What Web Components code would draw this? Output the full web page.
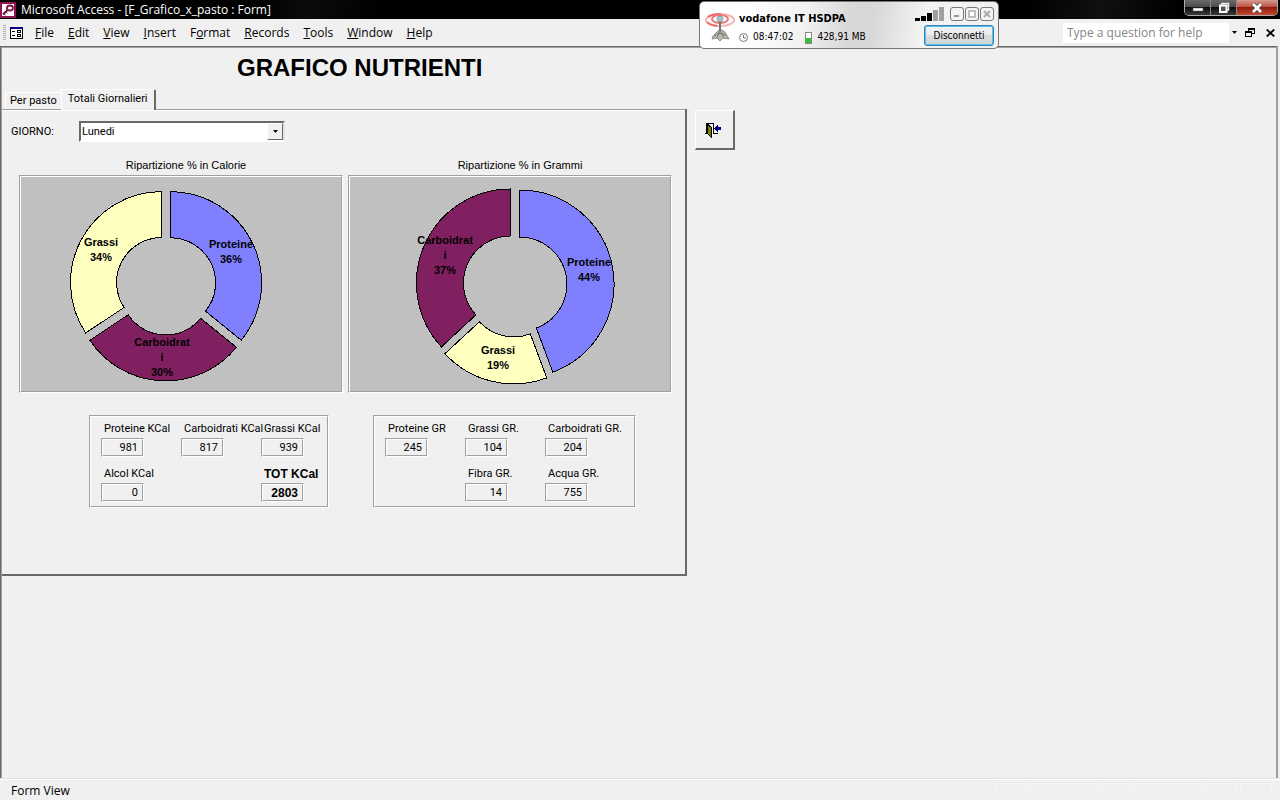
<!DOCTYPE html>
<html lang="it">
<head>
<meta charset="utf-8">
<title>Microsoft Access - [F_Grafico_x_pasto : Form]</title>
<style>
  html, body {
    height: 100%;
    margin: 0;
  }

  body {
    display: flex;
    flex-direction: column;
    overflow: hidden;
    background: #f0f0f0;
    color: #000;
    font-family: 'Open Sans', 'Noto Sans', sans-serif;
    font-size: 12px;
    --form-font: Roboto, 'Liberation Sans', Arial, sans-serif;
  }
</style>
</head>
<body>
  <title-bar>Microsoft Access - [F_Grafico_x_pasto : Form]</title-bar>
  <menu-bar></menu-bar>
  <form-workspace>
    <form-title slot="title">GRAFICO NUTRIENTI</form-title>
    <tab-panel>
      <day-picker></day-picker>
      <chart-row>
        <donut-chart heading="Ripartizione % in Calorie" cx="145" cy="108" radius="91" hole="45" style="--indent: 10px"
          slices='[{"name":["Proteine"],"value":981,"pct":"36%","color":"#8080ff","x":210,"y":71},
                   {"name":["Carboidrat","i"],"value":817,"pct":"30%","color":"#802060","x":141,"y":169},
                   {"name":["Grassi"],"value":939,"pct":"34%","color":"#ffffc0","x":80,"y":69}]'></donut-chart>
        <donut-chart heading="Ripartizione % in Grammi" cx="165" cy="108" radius="94" hole="47" style="--indent: 20px"
          slices='[{"name":["Proteine"],"value":245,"pct":"44%","color":"#8080ff","x":239,"y":89},
                   {"name":["Grassi"],"value":104,"pct":"19%","color":"#ffffc0","x":148,"y":177},
                   {"name":["Carboidrat","i"],"value":204,"pct":"37%","color":"#802060","x":95,"y":67}]'></donut-chart>
      </chart-row>
      <totals-row>
        <value-group>
          <value-field label="Proteine KCal" value="981"></value-field>
          <value-field label="Carboidrati KCal" value="817"></value-field>
          <value-field label="Grassi KCal" value="939"></value-field>
          <value-field label="Alcol KCal" value="0"></value-field>
          <value-field label="TOT KCal" value="2803" strong style="grid-column: 3"></value-field>
        </value-group>
        <value-group wide>
          <value-field label="Proteine GR" value="245"></value-field>
          <value-field label="Grassi GR." value="104"></value-field>
          <value-field label="Carboidrati GR." value="204"></value-field>
          <value-field label="Fibra GR." value="14" style="grid-column: 2"></value-field>
          <value-field label="Acqua GR." value="755"></value-field>
        </value-group>
      </totals-row>
    </tab-panel>
    <exit-button slot="side"></exit-button>
  </form-workspace>
  <status-bar>Form View</status-bar>
  <modem-widget></modem-widget>

<script>
// attaches an open shadow root and fills it
function shadowOf(el, html) {
  const root = el.attachShadow({ mode: 'open' });
  root.innerHTML = html;
  return root;
}

class TitleBar extends HTMLElement {
  constructor() {
    super();
    shadowOf(this, `
      <style>
        :host {
          display: flex;
          align-items: center;
          height: 19px;
          padding-right: 2px;
          background: linear-gradient(100deg, #000 20%, #0b0b0b 24%, #000 30%, #000 80%, #101010 86%, #000 92%);
          color: #fff;
          flex: none;
        }

        .logo {
          width: 16px;
          height: 16px;
          margin-right: 5px;
        }

        h1 {
          flex: 1;
          margin: 0;
          font-size: 12px;
          line-height: 18px;
          font-weight: normal;
          white-space: nowrap;
        }

        .controls {
          display: flex;
          align-self: flex-start;
          border: 1px solid #aaa;
          border-top: 0;
          border-radius: 0 0 5px 5px;
          overflow: hidden;
        }

        .controls button {
          display: flex;
          align-items: center;
          justify-content: center;
          width: 26px;
          height: 15px;
          padding: 0;
          border: 0;
          border-right: 1px solid #888;
          background: linear-gradient(#6b6b6b, #4a4a4a 45%, #0c0c0c 50%, #3a3a3a);
        }

        .controls .close {
          width: 40px;
          border-right: 0;
          background: linear-gradient(#d59a90, #bd5140 45%, #8f1c0c 50%, #c44a30);
        }
      </style>
      <svg class="logo" viewBox="0 0 16 16">
        <rect width="16" height="16" fill="#8a1550"/>
        <rect x="2" y="2" width="12" height="12" fill="#fff"/>
        <path d="M3 12.500L8 7.500" stroke="#7a1045" stroke-width="2" fill="none"/>
        <path d="M4 12L5.500 13.500M6 10L7.500 11.500" stroke="#7a1045" fill="none"/>
        <ellipse cx="10" cy="6" rx="3" ry="2.500" fill="#fff" stroke="#7a1045" stroke-width="1.800"/>
      </svg>
      <h1><slot></slot></h1>
      <div class="controls">
        <button aria-label="Minimize"><svg width="12" height="10"><rect x="1" y="5" width="10" height="3" fill="#fff" stroke="#555" stroke-width=".5"/></svg></button>
        <button aria-label="Restore"><svg width="12" height="12"><path d="M4 3V1.500H10.500V8H9" fill="none" stroke="#eee" stroke-width="1.500"/><rect x="2" y="3.500" width="6.500" height="6.500" fill="#555" stroke="#fff" stroke-width="2"/></svg></button>
        <button class="close" aria-label="Close"><svg width="12" height="12"><path d="M2 2L10 10M10 2L2 10" stroke="#555" stroke-width="4"/><path d="M2 2L10 10M10 2L2 10" stroke="#fff" stroke-width="2.500"/></svg></button>
      </div>
    `);
  }
}

class MenuBar extends HTMLElement {
  constructor() {
    super();
    shadowOf(this, `
      <style>
        :host {
          display: flex;
          align-items: center;
          height: 27px;
          padding-left: 3px;
          flex: none;
        }

        .grip {
          width: 3px;
          height: 16px;
          margin-right: 4px;
          background: repeating-linear-gradient(#b0b0b0 0 1px, #f0f0f0 1px 2px);
        }

        nav {
          display: flex;
          flex: 1;
          gap: 14px;
          margin-left: 12px;
        }

        button {
          padding: 0;
          border: 0;
          background: none;
          color: inherit;
          font: inherit;
          line-height: 20px;
        }

        input {
          box-sizing: border-box;
          width: 166px;
          height: 20px;
          padding: 0 4px;
          border: 0;
          background: #fff;
          font: inherit;
        }

        input::placeholder {
          color: #858585;
          opacity: 1;
        }

        .tool {
          display: flex;
          align-items: center;
          justify-content: center;
          height: 20px;
        }
      </style>
      <span class="grip"></span>
      <svg width="13" height="12" shape-rendering="crispEdges">
        <rect x="0" y="0" width="13" height="12" fill="#000"/>
        <rect x="0" y="0" width="13" height="2" fill="#000080"/>
        <rect x="1" y="2" width="11" height="9" fill="#fff"/>
        <path d="M2 4.500H5M2 8.500H5" stroke="#000"/>
        <rect x="7.500" y="3.500" width="3" height="2" fill="#fff" stroke="#000"/>
        <rect x="7.500" y="7.500" width="3" height="2" fill="#fff" stroke="#000"/>
      </svg>
      <nav>
        <button><u>F</u>ile</button>
        <button><u>E</u>dit</button>
        <button><u>V</u>iew</button>
        <button><u>I</u>nsert</button>
        <button>F<u>o</u>rmat</button>
        <button><u>R</u>ecords</button>
        <button><u>T</u>ools</button>
        <button><u>W</u>indow</button>
        <button><u>H</u>elp</button>
      </nav>
      <input type="text" placeholder="Type a question for help" aria-label="Help question">
      <button class="tool" aria-label="Recent questions" style="width: 11px"><svg width="5" height="3"><path d="M0 0H5L2.500 3Z"/></svg></button>
      <button class="tool" aria-label="Restore window" style="width: 20px"><svg width="10" height="9" shape-rendering="crispEdges"><path d="M3 4V1H9V5H7" fill="none" stroke="#000"/><path d="M3 1H9.500" stroke="#000" stroke-width="2"/><rect x="0.500" y="4.500" width="6" height="4" fill="#f0f0f0" stroke="#000"/><path d="M0 4H7" stroke="#000" stroke-width="2"/></svg></button>
      <button class="tool" aria-label="Close window" style="width: 20px"><svg width="9" height="8"><path d="M.8 .5L8.200 7.500M8.200 .5L.8 7.500" stroke="#000" stroke-width="1.800"/></svg></button>
    `);
  }
}

class FormWorkspace extends HTMLElement {
  constructor() {
    super();
    shadowOf(this, `
      <style>
        :host {
          display: block;
          flex: 1;
          min-height: 0;
          margin-right: 2px;
          border: solid #696969;
          border-width: 1px 0 0 1px;
          box-shadow: inset 1px 1px #a0a0a0;
          border-right: 2px solid #a0a0a0;
        }

        .content {
          display: flex;
          align-items: flex-start;
          gap: 8px;
          padding-left: 1px;
        }

        .side {
          padding-top: 21px;
        }
      </style>
      <slot name="title"></slot>
      <div class="content">
        <slot></slot>
        <div class="side"><slot name="side"></slot></div>
      </div>
    `);
  }
}

class FormTitle extends HTMLElement {
  constructor() {
    super();
    shadowOf(this, `
      <style>
        :host {
          display: block;
          padding: 6px 0 7px 236px;
        }

        h2 {
          margin: 0;
          font: bold 24px/29px 'Liberation Sans', Arial, sans-serif;
        }
      </style>
      <h2><slot></slot></h2>
    `);
  }
}

class TabPanel extends HTMLElement {
  constructor() {
    super();
    shadowOf(this, `
      <style>
        :host {
          display: block;
          font-family: var(--form-font);
          font-size: 11px;
        }

        .tabs {
          display: flex;
          align-items: flex-end;
          padding-left: 3px;
        }

        .tabs button {
          height: 17px;
          padding: 0 4px;
          border: solid #fff;
          border-width: 1px 0 0 1px;
          background: #f0f0f0;
          color: #000;
          font: inherit;
          line-height: 16px;
        }

        .tabs button.active {
          position: relative;
          height: 21px;
          margin-bottom: -1px;
          padding: 0 6px 2px;
          border-right: 2px solid #696969;
          border-radius: 2px 2px 0 0;
        }

        .page {
          min-height: 447px;
          padding: 12px 13px 6px 17px;
          border: solid #696969;
          border-width: 0 2px 2px 0;
          box-shadow: inset 0 1px #a0a0a0, inset 0 2px #fff;
        }
      </style>
      <div class="tabs" role="tablist">
        <button role="tab">Per pasto</button>
        <button role="tab" class="active" aria-selected="true">Totali Giornalieri</button>
      </div>
      <div class="page" role="tabpanel"><slot></slot></div>
    `);
  }
}

class DayPicker extends HTMLElement {
  constructor() {
    super();
    shadowOf(this, `
      <style>
        :host {
          display: flex;
          align-items: center;
          margin-left: -8px;
        }

        label {
          width: 68px;
        }

        .combo {
          display: grid;
          width: 202px;
          border: 2px solid;
          border-color: #696969 #e3e3e3 #fff #696969;
          background: #fff;
        }

        select, .arrow {
          grid-area: 1 / 1;
        }

        select {
          height: 17px;
          padding: 0 1px;
          border: 0;
          background: none;
          color: #000;
          appearance: none;
          font: inherit;
        }

        .arrow {
          display: flex;
          align-items: center;
          justify-content: center;
          justify-self: end;
          width: 14px;
          border: 1px solid;
          border-color: #fff #696969 #696969 #fff;
          background: #f0f0f0;
          pointer-events: none;
        }
      </style>
      <label for="day">GIORNO:</label>
      <div class="combo">
        <select id="day"><option>Lunedi</option></select>
        <span class="arrow"><svg width="5" height="3"><path d="M0 0H5L2.500 3Z"/></svg></span>
      </div>
    `);
  }
}

class ChartRow extends HTMLElement {
  constructor() {
    super();
    shadowOf(this, `
      <style>
        :host {
          display: flex;
          gap: 5px;
          margin-top: 16px;
        }
      </style>
      <slot></slot>
    `);
  }
}

// exploded ring chart, angles run clockwise from the top
class DonutChart extends HTMLElement {
  connectedCallback() {
    if (this.shadowRoot) return;

    const num = name => Number(this.getAttribute(name));
    const cx = num('cx'), cy = num('cy'), r = num('radius'), hole = num('hole');
    const slices = JSON.parse(this.getAttribute('slices'));
    const total = slices.reduce((sum, s) => sum + s.value, 0);
    const explode = 5;
    let start = 0;

    const shapes = slices.map(s => {
      const end = start + s.value / total * Math.PI * 2;
      const mid = (start + end) / 2;
      const ox = cx + explode * Math.sin(mid);
      const oy = cy - explode * Math.cos(mid);
      const at = (angle, len) => (ox + len * Math.sin(angle)).toFixed(1) + ' ' + (oy - len * Math.cos(angle)).toFixed(1);
      const d = `M${at(start, r)}A${r} ${r} 0 0 1 ${at(end, r)}L${at(end, hole)}A${hole} ${hole} 0 0 0 ${at(start, hole)}Z`;
      start = end;
      return `<path d="${d}" fill="${s.color}"/>`;
    });

    const labels = slices.map(s => [...s.name, s.pct]
      .map((line, i) => `<text x="${s.x}" y="${s.y + i * 15}">${line}</text>`).join(''));

    shadowOf(this, `
      <style>
        :host {
          display: block;
        }

        figure {
          margin: 0;
        }

        figcaption {
          padding: 0 0 3px var(--indent);
          font: 11px/14px 'Liberation Sans', Arial, sans-serif;
          text-align: center;
        }

        .plot {
          border: 1px solid;
          border-color: #a0a0a0 #fff #fff #a0a0a0;
        }

        svg {
          display: block;
          border: 1px solid;
          border-color: #fff #a0a0a0 #a0a0a0 #fff;
          background: #c0c0c0;
        }

        path {
          stroke: #000;
          shape-rendering: crispEdges;
        }

        text {
          font: bold 11px 'Liberation Sans', Arial, sans-serif;
          text-anchor: middle;
        }
      </style>
      <figure>
        <figcaption>${this.getAttribute('heading')}</figcaption>
        <div class="plot"><svg width="320" height="214" viewBox="0 0 320 214">${shapes.join('')}${labels.join('')}</svg></div>
      </figure>
    `);
  }
}

class TotalsRow extends HTMLElement {
  constructor() {
    super();
    shadowOf(this, `
      <style>
        :host {
          display: flex;
          align-items: stretch;
          gap: 44px;
          margin: 22px 0 0 70px;
        }
      </style>
      <slot></slot>
    `);
  }
}

class ValueGroup extends HTMLElement {
  constructor() {
    super();
    shadowOf(this, `
      <style>
        :host {
          display: block;
          width: 240px;
        }

        :host([wide]) {
          width: 263px;
        }

        .frame {
          border: 1px solid;
          border-color: #a0a0a0 #fff #fff #a0a0a0;
        }

        .grid {
          display: grid;
          grid-template-columns: repeat(3, 80px);
          row-gap: 8px;
          padding: 3px 0 4px 10px;
          border: 1px solid;
          border-color: #fff #a0a0a0 #a0a0a0 #fff;
        }
      </style>
      <div class="frame"><div class="grid"><slot></slot></div></div>
    `);
  }
}

class ValueField extends HTMLElement {
  connectedCallback() {
    if (this.shadowRoot) return;
    shadowOf(this, `
      <style>
        :host {
          display: block;
          white-space: nowrap;
        }

        :host([strong]) {
          font-family: 'Liberation Sans', Arial, sans-serif;
          font-size: 12px;
          font-weight: bold;
        }

        label {
          display: block;
          padding-left: 3px;
          line-height: 18px;
        }

        .box {
          width: 41px;
          border: 1px solid;
          border-color: #a0a0a0 #fff #fff #a0a0a0;
        }

        input {
          display: block;
          box-sizing: border-box;
          width: 41px;
          height: 17px;
          padding: 0 4px;
          border: 1px solid;
          border-color: #fff #a0a0a0 #a0a0a0 #fff;
          background: #f0f0f0;
          color: #000;
          font: inherit;
          text-align: right;
        }
      </style>
      <label for="value">${this.getAttribute('label')}</label>
      <div class="box"><input id="value" type="text" readonly value="${this.getAttribute('value')}"></div>
    `);
  }
}

class ExitButton extends HTMLElement {
  constructor() {
    super();
    shadowOf(this, `
      <style>
        :host {
          display: block;
        }

        button {
          display: flex;
          align-items: center;
          justify-content: center;
          width: 40px;
          height: 40px;
          padding: 0 2px 0 0;
          border: solid;
          border-width: 1px 2px 2px 1px;
          border-color: #fff #696969 #696969 #fff;
          background: #f0f0f0;
        }
      </style>
      <button aria-label="Chiudi maschera">
        <svg width="17" height="16" shape-rendering="crispEdges">
          <path d="M0 11.500H2M8 11.500H13M1.500 1V12M1 1.500H9M8.500 1V12" stroke="#000" fill="none"/>
          <path d="M2 2L6 5V15L2 11Z" fill="#808000" stroke="#000"/>
          <path d="M9 6.500L13 3V5H16V8H13V10Z" fill="#000080"/>
        </svg>
      </button>
    `);
  }
}

class StatusBar extends HTMLElement {
  constructor() {
    super();
    shadowOf(this, `
      <style>
        :host {
          display: flex;
          justify-content: space-between;
          align-items: center;
          flex: none;
          height: 18px;
          padding: 2px 8px 0 11px;
          border-top: 1px solid #fff;
          box-shadow: 0 -1px #e3e3e3;
          line-height: 18px;
        }

        .panes {
          display: flex;
          align-self: stretch;
          gap: 3px;
          padding: 1px 0 2px;
        }

        .panes i {
          width: 30px;
          border: 1px solid #f4f4f4;
        }
      </style>
      <slot></slot>
      <div class="panes"><i></i><i></i><i></i><i></i><i></i><i></i><i></i><i></i></div>
    `);
  }
}

// connection window floating over the main one
class ModemWidget extends HTMLElement {
  constructor() {
    super();
    shadowOf(this, `
      <style>
        :host {
          position: absolute;
          top: 1px;
          left: 699px;
          display: flex;
          box-sizing: border-box;
          width: 300px;
          height: 48px;
          padding: 4px 4px 1px 5px;
          border: 1px solid #777;
          border-radius: 5px;
          background: linear-gradient(100deg, #fff 15%, #f2f2f2 35%, #d8d8d8 50%, #d8d8d8 58%, #f4f4f4 75%, #f0f0f0);
          font: 10px 'DejaVu Sans Condensed', 'DejaVu Sans', sans-serif;
        }

        .info {
          flex: 1;
          padding: 5px 0 0 4px;
        }

        strong {
          display: block;
          font-size: 11px;
          line-height: 16px;
        }

        .stats {
          display: flex;
          align-items: center;
          padding-top: 2px;
          line-height: 16px;
        }

        .stats .time {
          margin: 0 12px 0 5px;
        }

        .stats .data {
          margin-left: 5px;
        }

        .side {
          display: flex;
          flex-direction: column;
          align-items: flex-end;
          gap: 4px;
        }

        .top {
          display: flex;
          align-items: center;
          gap: 1px;
        }

        .signal {
          margin-right: 5px;
        }

        .top button {
          display: flex;
          align-items: center;
          justify-content: center;
          width: 14px;
          height: 14px;
          padding: 0;
          border: 1px solid #777;
          border-radius: 3px;
          background: #f4f4f4;
        }

        .disconnect {
          width: 70px;
          height: 21px;
          padding: 0;
          border: 1px solid #3c7fb1;
          border-radius: 3px;
          box-shadow: inset 0 0 0 1px #48c4f0;
          background: linear-gradient(#f2f2f2, #ebebeb 50%, #dcdcdc 50%, #cfd4d6);
          color: #000;
          font: inherit;
        }
      </style>
      <svg width="30" height="36" viewBox="0 0 30 36">
        <ellipse cx="15" cy="14" rx="14" ry="6" fill="#fff" stroke="#f5b8b8" stroke-width="2"/>
        <path d="M3 11A14 6 0 0 1 16 8M2 16A14 6 0 0 0 12 20" stroke="#ee6a6a" stroke-width="2" fill="none"/>
        <ellipse cx="15" cy="13" rx="8" ry="4" fill="#fff" stroke="#ee7777" stroke-width="2"/>
        <path d="M15 14V27" stroke="#777" stroke-width="2"/>
        <circle cx="15" cy="13" r="3" fill="#a8c4cc" stroke="#668088" stroke-width=".6"/>
        <path d="M15 23L8 30L7 33L12 32L15 35L18 32L24 33L20 26Z" fill="#b8bab0" stroke="#777" stroke-width=".8"/>
        <path d="M15 24L12 32M15 24L19 32M9 30L14 27L21 29" stroke="#666" fill="none" stroke-width=".8"/>
      </svg>
      <div class="info">
        <strong>vodafone IT HSDPA</strong>
        <div class="stats">
          <svg width="9" height="9"><circle cx="4.500" cy="4.500" r="4" fill="#fff" stroke="#777"/><path d="M4.500 2V5H7" fill="none" stroke="#777"/></svg>
          <span class="time">08:47:02</span>
          <svg width="7" height="16" shape-rendering="crispEdges"><rect x=".5" y="3.500" width="6" height="11" fill="#fff" stroke="#888"/><rect x="1" y="9" width="5" height="5" fill="#2fc42f"/></svg>
          <span class="data">428,91 MB</span>
        </div>
      </div>
      <div class="side">
        <div class="top">
          <svg class="signal" width="29" height="15" shape-rendering="crispEdges"><path d="M0 12H5V15H0ZM6 10H11V15H6ZM12 7H17V15H12Z"/><path d="M18 4H23V15H18ZM24 1H29V15H24Z" fill="#a0a0a0"/></svg>
          <button aria-label="Riduci"><svg width="8" height="8"><rect x="1" y="5" width="5" height="2" fill="#999"/></svg></button>
          <button aria-label="Ingrandisci"><svg width="8" height="8"><rect x="1" y="1" width="6" height="6" fill="#fff" stroke="#aaa" stroke-width="1.500"/></svg></button>
          <button aria-label="Chiudi"><svg width="8" height="8"><path d="M1 1L7 7M7 1L1 7" stroke="#aaa" stroke-width="1.800"/></svg></button>
        </div>
        <button class="disconnect">Disconnetti</button>
      </div>
    `);
  }
}

customElements.define('title-bar', TitleBar);
customElements.define('menu-bar', MenuBar);
customElements.define('form-workspace', FormWorkspace);
customElements.define('form-title', FormTitle);
customElements.define('tab-panel', TabPanel);
customElements.define('day-picker', DayPicker);
customElements.define('chart-row', ChartRow);
customElements.define('donut-chart', DonutChart);
customElements.define('totals-row', TotalsRow);
customElements.define('value-group', ValueGroup);
customElements.define('value-field', ValueField);
customElements.define('exit-button', ExitButton);
customElements.define('status-bar', StatusBar);
customElements.define('modem-widget', ModemWidget);
</script>
</body>
</html>
